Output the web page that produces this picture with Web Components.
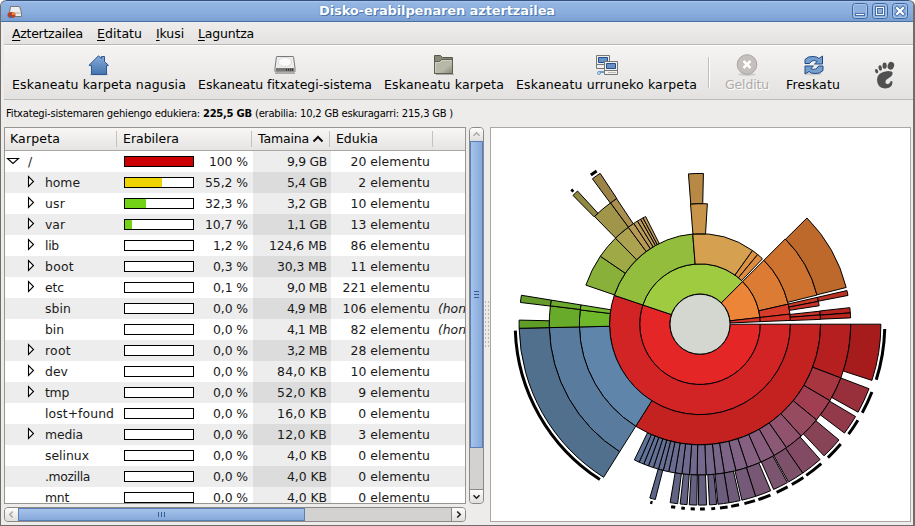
<!DOCTYPE html>
<html lang="eu">
<head>
<meta charset="utf-8">
<title>Disko-erabilpenaren aztertzailea</title>
<style>
html,body{margin:0;background:#fff}
body{width:915px;height:526px;overflow:hidden;font:12.500px "DejaVu Sans",sans-serif;color:#000}
</style>
</head>
<body>
<disk-analyser></disk-analyser>
<script>
function define(name, html, setup) {
  customElements.define(name, class extends HTMLElement {
    constructor() { super(); this.attachShadow({mode: 'open'}); }
    connectedCallback() {
      this.shadowRoot.innerHTML = typeof html === 'function' ? html(this) : html;
      if (setup) setup(this, this.shadowRoot);
    }
  });
}

// A single line of text, spaced to occupy the width given in "w".
define('fit-text', '<style>:host{display:inline-block;white-space:pre;line-height:16px}span{display:inline-block}u{text-underline-offset:2px}</style><span></span>', (el, root) => {
  const s = root.querySelector('span');
  s.innerHTML = el.getAttribute('text');
  const w = +el.getAttribute('w');
  if (w) {
    s.style.letterSpacing = ((w - s.getBoundingClientRect().width) / s.textContent.length) + 'px';
    el.style.width = w + 'px';
  }
});

define('title-bar', `<style>
:host{display:flex;box-sizing:border-box;height:22px;align-items:center;border-top:1px solid #36527c;border-bottom:1px solid #4a71a6;border-radius:6px 6px 0 0;background:linear-gradient(#a9c6ee 0,#93b5e2 2px,#89addd 12px,#7a9fd1);padding:0 6px 0 6px;justify-content:space-between}
.app{width:16px;height:18px;margin-right:-4px}.t{font-size:13px;font-weight:bold;color:#fff;text-shadow:0 0 1px #4472ad,1px 1px 0 #4d78b0}
.b{display:flex;gap:4px}
</style>
<svg class="app" viewBox="0 0 16 18"><path d="M3.500 4.500h9l2 6v4h-12v-4z" fill="#eee" stroke="#777"/><path d="M3 11h11" stroke="#aaa"/><ellipse cx="4.500" cy="13" rx="4" ry="3" fill="#b93d25"/><path d="M5 13v-3a4 3 0 0 1 3.500 3z" fill="#e98632"/><path d="M5 13l-3 2a4 3 0 0 0 3 1z" fill="#4269a4"/></svg>
<fit-text class="t" w="236" text="Disko-erabilpenaren aztertzailea"></fit-text>
<div class="b">
<svg width="16" height="16"><rect x=".5" y=".5" width="15" height="15" rx="3" fill="#8db0df" stroke="#3f659b"/><rect x="1.500" y="1.500" width="13" height="13" rx="2" fill="none" stroke="#a8c4e9"/><rect x="3.500" y="10.500" width="9" height="2" fill="#fff" stroke="#4a70a8"/></svg>
<svg width="16" height="16"><rect x=".5" y=".5" width="15" height="15" rx="3" fill="#8db0df" stroke="#3f659b"/><rect x="1.500" y="1.500" width="13" height="13" rx="2" fill="none" stroke="#a8c4e9"/><rect x="3.500" y="3.500" width="9" height="9" fill="#f4f8fd" stroke="#4a70a8"/><rect x="5.500" y="5.500" width="5" height="5" fill="#8db0df" stroke="#4a70a8"/></svg>
<svg width="16" height="16"><rect x=".5" y=".5" width="15" height="15" rx="3" fill="#8db0df" stroke="#3f659b"/><rect x="1.500" y="1.500" width="13" height="13" rx="2" fill="none" stroke="#a8c4e9"/><path d="M5 5l6 6m0-6l-6 6" stroke="#4a70a8" stroke-width="4" stroke-linecap="square"/><path d="M5 5l6 6m0-6l-6 6" stroke="#fff" stroke-width="2.200" stroke-linecap="square"/></svg>
</div>`, (el, root) => {
  // The caption is centred between the icon and the buttons of the window frame.
  root.querySelector('.t').style.marginLeft = 'auto';
  root.querySelector('.t').style.marginRight = '297px';
});

define('menu-bar', `<style>:host{display:flex;box-sizing:border-box;height:23px;gap:14px;padding:4px 0 0 8px;border-bottom:1px solid #bcbab8;background:linear-gradient(#eeedec,#e4e3e1)}</style>
<fit-text w="71" text="<u>A</u>ztertzailea"></fit-text><fit-text w="45" text="<u>E</u>ditatu"></fit-text><fit-text w="28" text="<u>I</u>kusi"></fit-text><fit-text w="56" text="<u>L</u>aguntza"></fit-text>`);

define('tool-button', el => `<style>
:host{display:flex;flex-direction:column;align-items:center;color:${el.hasAttribute('disabled') ? '#aeaba9;text-shadow:1px 1px 0 #fff' : '#000'}}
::slotted(svg){display:block;width:24px;height:24px}
</style><slot></slot><fit-text w="${el.getAttribute('w')}" text="${el.getAttribute('label')}"></fit-text>`);

define('tool-bar', `<style>
:host{display:flex;box-sizing:border-box;height:55px;padding:7px 17px 0 8px;border-top:1px solid #fff;border-bottom:1px solid #bcbab8;background:linear-gradient(#f5f4f3,#e3e2e0);gap:12px;align-items:flex-start}
i{width:1px;height:31px;background:#bfbdbb;border-right:1px solid #fff;margin:4px 3px 0 -1px}
.foot{width:22px;height:28px;margin:8px 0 0 auto}
</style>
<tool-button w="174" label="Eskaneatu karpeta nagusia"><svg viewBox="0 0 24 24"><defs><linearGradient id="a" x2="0" y2="1"><stop stop-color="#86abd8"/><stop offset="1" stop-color="#4474ae"/></linearGradient></defs><path d="M3 21.500h18" stroke="#bbb" stroke-width="1.500"/><path d="M2.300 12L11.500 2.800l3 2.700V3.500h3v5.200L21.200 12v.6H19.500v8.900h-15v-8.900H2.300z" fill="url(#a)" stroke="#2b579a"/></svg></tool-button>
<tool-button w="174" label="Eskaneatu fitxategi-sistema"><svg viewBox="0 0 24 24"><path d="M2 20.500h20" stroke="#aaa"/><path d="M4 3.500h16q.5 0 .6.600l1.400 11v3.400q0 .5-.5.500h-19q-.5 0-.5-.5v-3.400l1.400-11q.1-.6.600-.6z" fill="#ededeb" stroke="#777"/><ellipse cx="12" cy="9" rx="6.500" ry="4.500" fill="#fafafa" stroke="#ccc" stroke-width=".6"/><path d="M3 15h18v3.500H3z" fill="#777873"/><path d="M13 16.800h7" stroke="#333" stroke-width="2" stroke-dasharray="1 1"/></svg></tool-button>
<tool-button w="120" label="Eskaneatu karpeta"><svg viewBox="0 0 24 24"><defs><linearGradient id="b" x2="1" y2="1"><stop stop-color="#b6b7a3"/><stop offset=".6" stop-color="#b8b9a9"/><stop offset="1" stop-color="#848674"/></linearGradient></defs><path d="M4 21.500h18" stroke="#aaa"/><path d="M2.500 20.500v-18h6l2 2h10v16z" fill="#878a75" stroke="#565849"/><path d="M2.500 20.500V8.500h5l2-2h11v14z" fill="url(#b)" stroke="#5d5f50"/><path d="M3.500 19.500v-10h4.500l2-2h9.500" fill="none" stroke="#d1d2c3"/></svg></tool-button>
<tool-button w="181" label="Eskaneatu urruneko karpeta"><svg viewBox="0 0 24 24"><g stroke="#777"><path d="M1.500 2.500h13v9h-13zM1.500 11.500h13v4h-13z" fill="#eee"/><path d="M3.500 4.500h9v5h-9z" fill="#6990c5" stroke="#244f8b"/><path d="M4 19h6" stroke="#6c9bc7" stroke-width="2"/><circle cx="4" cy="20" r="1.500" fill="#cfe1f3" stroke="#6c9bc7"/><path d="M9.500 8.500h13v9h-13zM9.500 17.500h13v4h-13z" fill="#f2f2f0"/><path d="M11.500 10.500h9v5h-9z" fill="#6990c5" stroke="#244f8b"/><path d="M13 19.500h8" stroke="#bbb"/></g></svg></tool-button>
<i></i>
<tool-button disabled w="44" label="Gelditu"><svg viewBox="0 0 24 24"><ellipse cx="12" cy="21.500" rx="9" ry="1.500" fill="#ccc"/><circle cx="12" cy="11.500" r="9.800" fill="#c5bfbe" stroke="#aaa6a4"/><path d="M8.500 8l7 7m0-7l-7 7" stroke="#fff" stroke-width="2.500"/></svg></tool-button>
<tool-button style="margin-left:5px" w="54" label="Freskatu"><svg viewBox="0 0 24 24"><ellipse cx="12" cy="21" rx="9" ry="1.500" fill="#ccc"/><g fill="#779fce" stroke="#204a87" stroke-linejoin="round" transform="translate(1 0)"><path d="M3 10.500V6.500Q6 3 11 3.500q4 0 6 2L20.500 3v8h-8l2.800-2.600Q10 6 7.500 10.500z"/><path d="M21 13v4.500q-3 3.500-8 3-4 0-6-2L3 21v-8h8.500l-2.800 2.600Q14 18 16.500 13z"/></g></svg></tool-button>
<svg class="foot" viewBox="0 0 22 28" fill="#505050"><ellipse cx="16.800" cy="4.800" rx="3.200" ry="3.900" transform="rotate(18 17 5)"/><ellipse cx="10.600" cy="4.700" rx="2.100" ry="3.100"/><ellipse cx="6.200" cy="7" rx="1.700" ry="2.700" transform="rotate(-12 6 7)"/><ellipse cx="2.600" cy="10" rx="1.500" ry="2.300" transform="rotate(-20 3 10)"/><path d="M18.500 11.500Q18 10 14 10 3 11 3 18.500 3 27 11 27.500q7.500-.5 7.500-6.500-.5-1.500-2-.8-.5 2.800-3.500 2.800-2-.3-1.500-2.500.5-2 4-4 3.500-2 3-5z"/></svg>`);

define('status-line', `<style>:host{display:flex;height:27px;padding:6px 0 0 2px;font-size:10px;box-sizing:border-box}.bold{font-weight:bold}</style>
<fit-text w="197" text="Fitxategi-sistemaren gehiengo edukiera: "></fit-text><fit-text class="bold" w="52" text="225,5 GB "></fit-text><fit-text w="198" text="(erabilia: 10,2 GB eskuragarri: 215,3 GB )"></fit-text>`);

define('usage-meter', el => { const v = +el.getAttribute('value'); return `<style>:host{display:block;width:68px;height:9px;border:1px solid #000;background:#fff}i{display:block;height:9px;width:${Math.floor(v * .68)}px;background:${v > 90 ? '#c00' : v > 50 ? '#edd400' : '#73d216'}}</style>${v > 5 ? '<i></i>' : ''}`; });

define('folder-row', el => {
  const [n, p, s, c, x, note] = el.getAttribute('data').split('|');
  const odd = el.hasAttribute('odd'), root = x === 'r';
  const tri = root ? '<svg width="14" height="21"><path d="M1.500 7.500h11l-5.500 5z" fill="#fff" stroke="#000" stroke-width="1.100"/></svg>'
    : '<svg width="14" height="21"><path d="M5.500 4.500v10l5-5z" fill="#fff" stroke="#000" stroke-width="1.100"/></svg>';
  return `<style>:host{display:grid;grid-template-columns:112px 136px 78px 102px 1fr;height:21px;line-height:21px;background:${odd ? '#ededed' : '#fff'};color:#1a1a1a;font-size:12.400px}
div{display:flex;white-space:pre}svg{display:block;flex:none;width:14px}
.n{padding-left:${root ? 1 : 18}px}.n span{margin-left:8px}.n b{width:14px}
.u{align-items:center;padding-left:7px;justify-content:space-between;padding-right:5px}.s{background:${odd ? '#dcdcdc' : '#ededed'};justify-content:flex-end;padding-right:4px}
.c{justify-content:flex-end;padding-right:3px}.e{font-style:italic;padding-left:5px}
fit-text{line-height:21px}</style>
<div class="n">${x ? tri : '<b></b>'}<span>${n.length > 2 ? `<fit-text w="${{home:35,usr:20,var:20,lib:14,boot:29,etc:19,sbin:26,bin:19,root:26,dev:23,tmp:24,'lost+found':69,media:38,selinux:44,'.mozilla':45,mnt:24}[n]}" text="${n}"></fit-text>` : n}</span></div>
<div class="u"><usage-meter value="${p.replace(',', '.')}"></usage-meter><fit-text w="${p.length > 3 ? 43 : p === '100' ? 39 : 35}" text="${p} %"></fit-text></div>
<div class="s"><fit-text w="${Math.round(s.length * 8.100 - (s.length < 7 ? 8.500 : 7))}" text="${s}"></fit-text></div>
<div class="c"><fit-text w="${64 + 7.800 * c.length}" text="${c} elementu"></fit-text></div><div class="e">${note ? `<fit-text w="28" text="${note}"></fit-text>` : ''}</div>`;
});

define('scroll-bar', el => {
  const v = el.hasAttribute('vertical');
  const btn = (cls, d, c) => `<svg class="${cls}" viewBox="0 0 15 15"><path d="${d}" fill="none" stroke="${c}" stroke-width="1.800"/></svg>`;
  return `<style>:host{display:flex;box-sizing:border-box;flex-direction:${v ? 'column' : 'row'};border:1px solid #8b8986;border-radius:4px;background:#d4d2d0;overflow:hidden}
.b{flex:none;width:13px;height:13px;background:linear-gradient(#fdfdfc,#e0dfdd)}.th{display:flex;flex:none;align-items:center;justify-content:center;box-sizing:border-box;border:1px solid #5a7fb4;background:linear-gradient(${v ? '90deg' : '180deg'},#a5c3eb,#86a9da)}
.th{${v ? 'height:307px;margin-bottom:auto' : 'width:287px;margin-right:auto'}}.e{border-${v ? 'top' : 'left'}:1px solid #8b8986}
.g{display:flex;flex-direction:${v ? 'column' : 'row'};gap:2px}.g i{${v ? 'width:5px;height:1px' : 'height:5px;width:1px'};background:#365f99}</style>
${v ? btn('b', 'M4 9l3.500-3.500L11 9', '#aaa') : btn('b', 'M9 4L5.500 7.500 9 11', '#aaa')}<div class="th"><div class="g"><i></i><i></i><i></i></div></div>${v ? btn('b e', 'M4 6l3.500 3.500L11 6', '#222') : btn('b e', 'M6 4l3.500 3.500L6 11', '#222')}`;
});

define('folder-list', () => {
  const rows = ['/|100|9,9 GB|20|r', 'home|55,2|5,4 GB|2|x', 'usr|32,3|3,2 GB|10|x', 'var|10,7|1,1 GB|13|x', 'lib|1,2|124,6 MB|86|x', 'boot|0,3|30,3 MB|11|x', 'etc|0,1|9,0 MB|221|x', 'sbin|0,0|4,9 MB|106||(hon', 'bin|0,0|4,1 MB|82||(hon', 'root|0,0|3,2 MB|28|x', 'dev|0,0|84,0 KB|10|x', 'tmp|0,0|52,0 KB|9|x', 'lost+found|0,0|16,0 KB|0|', 'media|0,0|12,0 KB|3|x', 'selinux|0,0|4,0 KB|0|', '.mozilla|0,0|4,0 KB|0|', 'mnt|0,0|4,0 KB|0|'];
  return `<style>:host{display:block;box-sizing:border-box;width:462px;height:377px;border:1px solid #979590;background:#fff;overflow:hidden}
.h{display:grid;grid-template-columns:112px 135px 78px 103px 1fr;height:22px;border-bottom:1px solid #aaa7a4;background:linear-gradient(#f8f7f6,#e5e4e2)}
.h div{display:flex;align-items:center;padding-left:6px;border-right:1px solid #c4c2bf;height:16px;margin-top:3px;box-sizing:border-box}.h div:first-child{padding-left:5px}.h div:last-child{border:0}</style>
<div class="h"><div><fit-text w="50" text="Karpeta"></fit-text></div><div><fit-text w="56" text="Erabilera"></fit-text></div><div><fit-text w="51" text="Tamaina"></fit-text><svg width="14" height="14"><path d="M4.500 9.500L9 5l4.500 4.500" fill="none" stroke="#111" stroke-width="2"/></svg></div><div><fit-text w="42" text="Edukia"></fit-text></div><div></div></div>
${rows.map((r, i) => `<folder-row ${i % 2 ? 'odd' : ''} data="${r}"></folder-row>`).join('')}`;
});

// Ring sectors: [ring, start, end, colour]; ring n spans 30n to 30(n+1) px, degrees run clockwise.
const sectors = [
[1,0,198.6,'#e42626'],[1,198.6,315,'#9fcb41'],[1,315,353.6,'#ed8539'],[1,353.6,357.6,'#dc3529'],
[2,0,198.6,'#d22424'],[2,198.6,265.4,'#93bd3d'],[2,265.4,305.5,'#d5a04f'],[2,305.5,309.6,'#dc9143'],[2,309.6,313.7,'#dc8c3f'],[2,315,347.2,'#db7b34'],[2,347.2,353.6,'#d63c28'],[2,353.6,357.6,'#d53228'],
[3,0,122.2,'#c42121'],[3,122.2,178.7,'#6085aa'],[3,178.7,186.8,'#6fb82c'],[3,186.8,189.2,'#76b832'],
[3,198.9,214.3,'#89b13a'],[3,214.3,225.5,'#9faa47'],[3,225.5,233.5,'#ada24f'],[3,233.5,236.7,'#b89a55'],[3,236.7,238.8,'#bb9c57'],[3,238.8,240.5,'#bd9b58'],[3,240.5,241.8,'#be9a58'],[3,241.8,243.2,'#bf9a58'],
[3,265.5,273.5,'#c79449'],[3,315,346,'#ce7230'],[3,347.1,349.1,'#c83827'],[3,349.1,351.2,'#c63429'],[3,353.8,355.6,'#c63427'],[3,355.6,357.7,'#c82e25'],
[4,0,20.9,'#b51f20'],[4,122.2,178.7,'#597b9d'],[4,178.7,187,'#68aa29'],[4,187,189.2,'#6ca92e'],[4,225.6,233.6,'#a09549'],[4,233.6,236.4,'#aa8f4e'],[4,265.6,271.3,'#b88944'],[4,315.2,345.9,'#be692c'],[4,347.1,349,'#b93325'],[4,353.7,355.7,'#b82520'],[4,355.7,357.6,'#b9251f'],
[5,0,18.1,'#a61c1c'],[5,122.2,178.7,'#51708e'],[5,178.7,181.3,'#5f9e27'],[5,186.9,189.2,'#649b2b'],[5,225.4,227.4,'#918842'],[5,233.5,236.5,'#9c8347']
];
[20.9,30.5,39.4,47.9,55,60.6,66.2,71.7,76.2,80.7,84.1,87.7,91.1,94,96.9,99.5,102,104.1,106,108,110,111.9,113.8,115.8].forEach((a, i, arr) => {
  const col = ['#a73641','#a13e51','#964b60','#90526d','#8b5975','#885c7c','#856080','#806284','#7c6486','#786689','#76678b','#74688c','#72698c','#6f6a8d','#6c6b8e','#6a6c8f','#686d91','#666e92','#646f93','#637094','#617195','#607296','#5f7397'];
  if (i < arr.length - 1) sectors.push([4, a, arr[i + 1], col[i]]);
});
const leaves = [[20.9,29.1,'#98303b'],[30.7,37,'#92394a'],[39.8,46.7,'#884357'],[48.4,55.4,'#834a63'],[55.4,60.7,'#7e516b'],[61.1,66,'#7b5570'],[67,72.1,'#785774'],[72.1,76.6,'#745979'],[77.2,80.8,'#705b7b'],[80.8,84.3,'#6d5d7d'],[84.7,87,'#695e7f'],[87.9,90.5,'#686080'],[91,93.4,'#666181'],[94.1,96.3,'#646282'],[97.1,99.5,'#616383'],[104.3,106.1,'#5c6687']];
leaves.forEach(([a, b, c]) => sectors.push([5, a, b, c]));
const marks = [[1.5,17.5],[122.8,178],[225.9,226.7],[233.8,236],...leaves.map(([a, b]) => [a + .6, b - .5])];

define('ring-chart', () => {
  const pt = (r, a) => { a *= Math.PI / 180; return (209 + r * Math.cos(a)).toFixed(2) + ' ' + (196.200 + r * Math.sin(a)).toFixed(2); };
  const arc = (r, a, b) => `A${r} ${r} 0 ${b - a > 180 ? 1 : 0} 1 ${pt(r, b)}`;
  const R = n => n * 30.150;
  const d = sectors.map(([n, a, b, c]) => `<path fill="${c}" d="M${pt(R(n), a)}${arc(R(n), a, b)}L${pt(R(n + 1), b)}A${R(n + 1)} ${R(n + 1)} 0 ${b - a > 180 ? 1 : 0} 0 ${pt(R(n + 1), a)}Z"/>`).join('');
  const m = marks.map(([a, b]) => `<path d="M${pt(184.800, a)}${arc(184.800, a, b)}"/>`).join('');
  return `<style>:host{display:block;box-sizing:border-box;width:421px;height:395px;border:1px solid #aaa7a4;background:#fff}svg{display:block}</style>
<svg width="419" height="393"><g stroke="#000" stroke-width="1" stroke-linejoin="round">${d}<circle cx="209" cy="196.200" r="30" fill="#d3d7cf"/></g><g fill="none" stroke="#000" stroke-width="3">${m}</g></svg>`;
});

define('disk-analyser', `<style>
:host{display:flex;flex-direction:column;box-sizing:border-box;width:915px;height:526px;background:#edeceb;border:solid #6f6c6a;border-width:0 2px 1px 1px;border-radius:6px 6px 0 0;overflow:hidden}
title-bar{margin:0 -1px 0 0}.in{display:flex;flex-direction:column;padding:0 0 0 3px}
.main{display:flex}.l{display:grid;grid-template-columns:462px 15px;gap:3px}
.v{height:377px;width:15px}.hz{height:15px;width:462px}
.grip{width:6px;height:48px;margin-top:173px;background:radial-gradient(circle,#b8b6b4 35%,transparent 45%) 0 0/3px 4px}
</style>
<title-bar></title-bar><div class="in"><menu-bar></menu-bar><tool-bar></tool-bar><status-line></status-line>
<div class="main"><div class="l"><folder-list></folder-list><scroll-bar vertical class="v"></scroll-bar><scroll-bar class="hz"></scroll-bar></div><div class="grip"></div><ring-chart></ring-chart></div></div>`);
</script>
</body>
</html>
